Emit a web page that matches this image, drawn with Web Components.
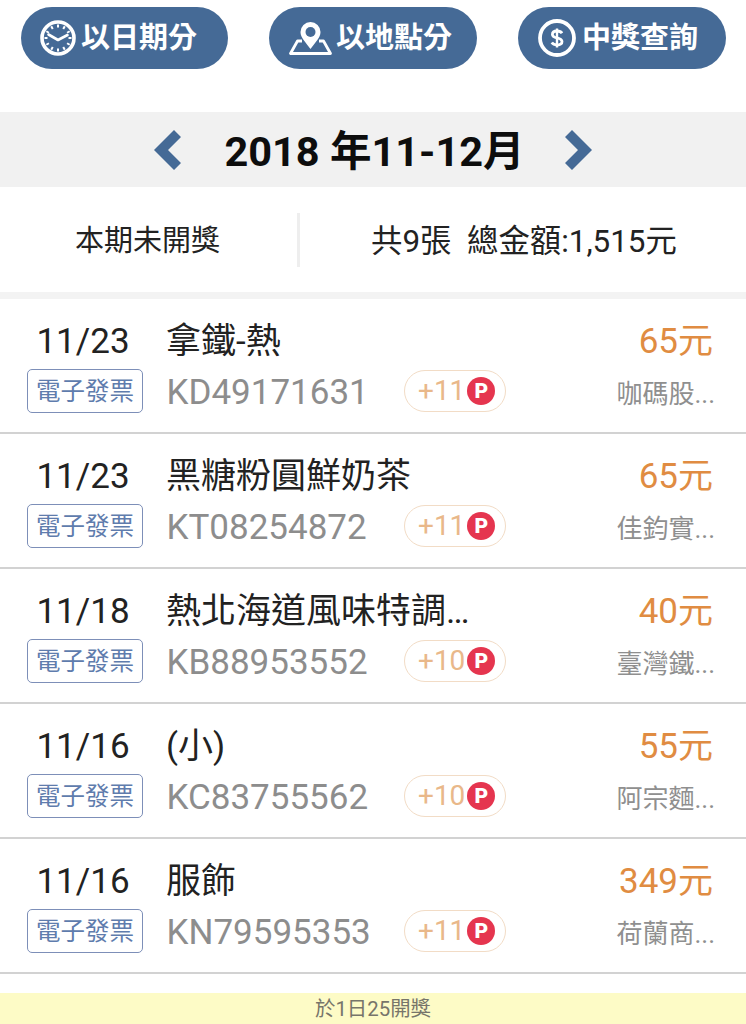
<!DOCTYPE html>
<html lang="zh-Hant">
<head>
<meta charset="utf-8">
<title>發票</title>
<style>
html,body{margin:0;padding:0;background:#fff}
body{width:746px;height:1024px;overflow:hidden;font-family:Roboto,"Noto Sans CJK TC",sans-serif}
</style>
</head>
<body>
<invoice-app></invoice-app>
<script>
const FONT = 'Roboto,"Noto Sans CJK TC",sans-serif';

class PillButton extends HTMLElement {
  constructor(){
    super();
    this.attachShadow({mode:'open'}).innerHTML = `
    <style>
      :host{display:flex;align-items:center;justify-content:center;gap:var(--gap,5px);width:var(--w,208px);height:62px;padding-right:var(--shift,0);border-radius:31px;background:#456a96;color:#fff;font:700 29px/64px ${FONT};box-sizing:border-box}
      ::slotted(svg){flex:none;display:block}
    </style><slot name="icon"></slot><slot></slot>`;
  }
}
customElements.define('pill-button', PillButton);

class TabBar extends HTMLElement {
  constructor(){
    super();
    this.attachShadow({mode:'open'}).innerHTML = `
    <style>:host{display:flex;justify-content:space-between;padding:7px 20px 0 21px;height:62px}</style><slot></slot>`;
  }
}
customElements.define('tab-bar', TabBar);

class PeriodBar extends HTMLElement {
  constructor(){
    super();
    this.attachShadow({mode:'open'}).innerHTML = `
    <style>
      :host{display:flex;align-items:center;justify-content:center;height:75px;margin-top:43px;background:#f1f1f1;color:#0d0d0d;font:700 41.5px/1 ${FONT}}
      svg{display:block;flex:none}
      span{margin:4px 39px 0 42px;white-space:pre}
    </style>
    <svg width="30" height="42" viewBox="0 0 30 42"><path d="M22 1 L29 8 L16 21 L29 34 L22 41 L2 21 Z" fill="#456a96"/></svg>
    <span><slot></slot></span>
    <svg width="30" height="42" viewBox="0 0 30 42"><path d="M8 1 L1 8 L14 21 L1 34 L8 41 L28 21 Z" fill="#456a96"/></svg>`;
  }
}
customElements.define('period-bar', PeriodBar);

class SummaryBar extends HTMLElement {
  constructor(){
    super();
    this.attachShadow({mode:'open'}).innerHTML = `
    <style>
      :host{display:grid;grid-template-columns:297px 3px 1fr;align-items:center;height:105px;border-bottom:7px solid #f3f3f3;color:#222;font:400 29px/1 ${FONT};white-space:pre}
      .l{text-align:center;padding:4px 2px 0 0}
      .d{height:54px;background:#eeeeee}
      .r{padding:4px 0 0 71px;font-size:31.4px}
    </style>
    <div class="l"><slot name="left"></slot></div><div class="d"></div><div class="r"><slot name="right"></slot></div>`;
  }
}
customElements.define('summary-bar', SummaryBar);

class InvoiceRow extends HTMLElement {
  constructor(){
    super();
    const a = n => this.getAttribute(n);
    this.attachShadow({mode:'open'}).innerHTML = `
    <style>
      :host{display:grid;grid-template-columns:116px 261px 102px 1fr;grid-template-rows:44px 44px;row-gap:6px;align-content:center;box-sizing:border-box;height:135px;padding:0 33px 0 27px;border-bottom:2px solid #d2d2d2;font-family:${FONT}}
      .date{font-size:35px;line-height:46px;color:#222;text-align:center;padding-right:4px}
      .name{grid-column:2 / span 2;margin-left:23px;font-size:35px;line-height:46px;color:#222;white-space:nowrap}
      .amt{font-size:35px;line-height:46px;color:#e08c42;text-align:right;white-space:nowrap}
      .badge{box-sizing:border-box;height:44px;border:1.5px solid #7d8fb8;border-radius:5px;color:#5f7cad;font-size:24.5px;line-height:44px;text-align:center;white-space:nowrap}
      .code{margin-left:23.5px;font-size:35px;line-height:48px;color:#8d8d8d;white-space:nowrap}
      .pill{box-sizing:border-box;height:42px;margin-top:1px;border:1.5px solid #f2dcc6;border-radius:21px;display:flex;align-items:center;padding-left:13px;gap:2px;color:#e9b88a;font-size:28px}
      .p{width:28px;height:28px;border-radius:50%;background:#e5354f;color:#fff;font-size:21px;font-weight:900;line-height:28px;text-align:center;flex:none}
      .store{font-size:26px;line-height:50px;color:#8f8f8f;text-align:right;white-space:nowrap;margin-right:-2px}
    </style>
    <div class="date">${a('date')}</div>
    <div class="name">${a('name')}</div>
    <div class="amt">${a('amount')}</div>
    <div class="badge">電子發票</div>
    <div class="code">${a('code')}</div>
    <div class="pill"><span>${a('points')}</span><span class="p">P</span></div>
    <div class="store">${a('store')}</div>`;
  }
}
customElements.define('invoice-row', InvoiceRow);

class NoticeBar extends HTMLElement {
  constructor(){
    super();
    this.attachShadow({mode:'open'}).innerHTML = `
    <style>:host{display:block;height:31px;margin-top:19px;background:#fdfbc6;color:#77756a;font:400 20.4px/32px ${FONT};text-align:center}</style><slot></slot>`;
  }
}
customElements.define('notice-bar', NoticeBar);

class InvoiceApp extends HTMLElement {
  constructor(){
    super();
    const ticks = [0,30,60,90,120,150,180,210,240,270,300,330].map(d=>`<line x1="18" y1="4.5" x2="18" y2="7.5" transform="rotate(${d} 18 18)"/>`).join('');
    const rows = [
      ['11/23','拿鐵-熱','65元','KD49171631','+11','咖碼股...'],
      ['11/23','黑糖粉圓鮮奶茶','65元','KT08254872','+11','佳鈞實...'],
      ['11/18','熱北海道風味特調…','40元','KB88953552','+10','臺灣鐵...'],
      ['11/16','(小)','55元','KC83755562','+10','阿宗麵...'],
      ['11/16','服飾','349元','KN79595353','+11','荷蘭商...'],
    ].map(r=>`<invoice-row date="${r[0]}" name="${r[1]}" amount="${r[2]}" code="${r[3]}" points="${r[4]}" store="${r[5]}"></invoice-row>`).join('');
    this.attachShadow({mode:'open'}).innerHTML = `
    <style>:host{display:block;width:746px;height:1024px;overflow:hidden}</style>
    <tab-bar>
      <pill-button style="--w:207px;--shift:12px">
        <svg slot="icon" width="36" height="36" viewBox="0 0 36 36" fill="none" stroke="#fff"><circle cx="18" cy="18" r="16" stroke-width="3.6"/><g stroke-width="2">${ticks}</g><path d="M8.5 14.5 L18 20 L27.5 15" stroke-width="2.6" stroke-linecap="round" stroke-linejoin="round"/></svg>
        以日期分
      </pill-button>
      <pill-button style="--shift:5px;--gap:4px">
        <svg slot="icon" width="43" height="34" viewBox="0 0 43 34" fill="none" stroke="#fff"><path d="M13 20 H8.5 L1.5 32.5 H41.5 L34.5 20 H30" stroke-width="2.8" stroke-linejoin="round"/><path d="M21.5 28 C17 21.5 11.5 17 11.5 11 A10 10 0 0 1 31.5 11 C31.5 17 26 21.5 21.5 28 Z" fill="#fff" stroke="none"/><circle cx="21.5" cy="11" r="5" fill="#456a96" stroke="none"/></svg>
        以地點分
      </pill-button>
      <pill-button style="--shift:8px;--gap:6px">
        <svg slot="icon" width="38" height="38" viewBox="0 0 38 38" fill="none" stroke="#fff"><circle cx="19" cy="19" r="17" stroke-width="3.8"/><path d="M24 14.2 C23 12.6 21 12 19 12 C16.4 12 14.4 13.2 14.4 15.4 C14.4 20 24 17.8 24 22.6 C24 25 21.8 26 19 26 C16.8 26 14.8 25.2 13.8 23.6" stroke-width="2.8"/><path d="M19 9.5 V28.5" stroke-width="2.4"/></svg>
        中獎查詢
      </pill-button>
    </tab-bar>
    <period-bar>2018 年11-12月</period-bar>
    <summary-bar><span slot="left">本期未開獎</span><span slot="right">共9張  總金額:1,515元</span></summary-bar>
    ${rows}
    <notice-bar>於1日25開獎</notice-bar>`;
  }
}
customElements.define('invoice-app', InvoiceApp);
</script>
</body>
</html>
